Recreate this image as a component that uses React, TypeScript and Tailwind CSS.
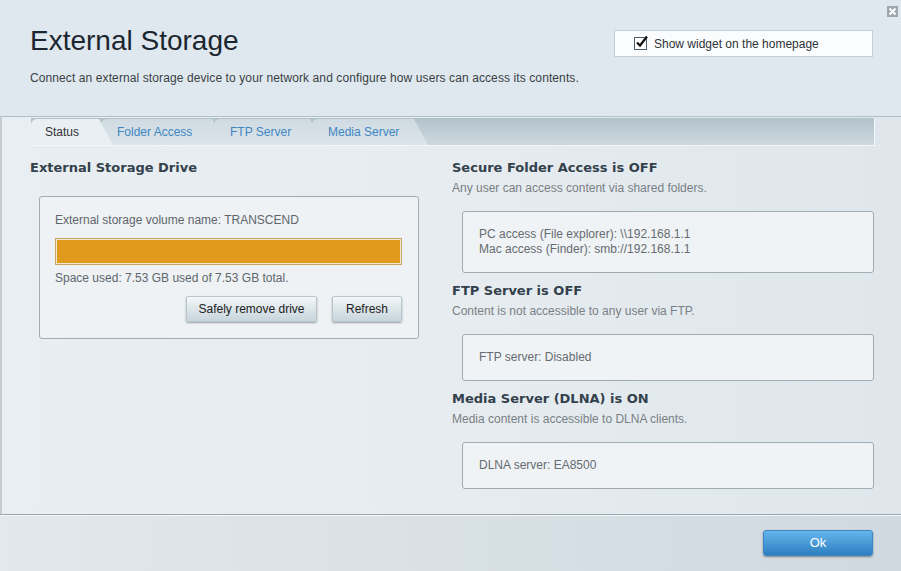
import React from "react";

const tabs = [
  { label: "Status", w: 70, active: true },
  { label: "Folder Access", w: 113 },
  { label: "FTP Server", w: 98 },
  { label: "Media Server", w: 104 },
];

function Section({ title, sub, lines, boxClass }: { title: string; sub: string; lines: string[]; boxClass: string }) {
  return (
    <div className="flex flex-col">
      <div className="text-[13px] leading-[20px] font-bold text-[#33414c] [font-family:'DejaVu_Sans',sans-serif]">{title}</div>
      <div className="mt-[2px] text-[12px] leading-[16px] text-[#7a7f84]">{sub}</div>
      <div className={"ml-[10px] rounded-[3px] border border-[#a3abb2] bg-[#eff3f6] px-[16px] text-[12px] leading-[15px] text-[#666b70] flex flex-col justify-center " + boxClass}>
        {lines.map((l) => (
          <div key={l}>{l}</div>
        ))}
      </div>
    </div>
  );
}

export default function App() {
  return (
    <div className="relative w-[901px] h-[571px] flex flex-col overflow-hidden bg-[#e3eaef] [font-family:'Liberation_Sans',Arial,sans-serif]">
      {/* close */}
      <div className="absolute left-[887px] top-[6px] w-[11px] h-[11px] bg-[#9ea7ae] flex items-center justify-center">
        <svg width="9" height="9" viewBox="0 0 9 9">
          <path d="M1.5 1.5 L7.5 7.5 M7.5 1.5 L1.5 7.5" stroke="#ffffff" strokeWidth="2" />
        </svg>
      </div>

      {/* header */}
      <div className="h-[116px] shrink-0 bg-[#dfe8ef] flex justify-between px-[30px] pt-[24px]">
        <div className="flex flex-col">
          <div className="text-[28px] leading-[34px] text-[#1c2630]">External Storage</div>
          <div className="mt-[12px] text-[12px] leading-[16px] tracking-[0.1px] text-[#3a3f44]">
            Connect an external storage device to your network and configure how users can access its contents.
          </div>
        </div>
        <div className="mt-[6px] mr-[-2px] w-[259px] h-[27px] bg-[#fbfcfd] border border-[#c3ced6] flex items-center pl-[19px] gap-[7px]">
          <div className="w-[13px] h-[13px] border border-[#4f5f6c] bg-white relative">
            <svg className="absolute left-[0px] top-[-3px]" width="14" height="14" viewBox="0 0 14 14">
              <path d="M2 7.5 L5 10.5 L12 1.5" fill="none" stroke="#111" strokeWidth="2.2" />
            </svg>
          </div>
          <span className="text-[12px] text-[#2e3338]">Show widget on the homepage</span>
        </div>
      </div>

      {/* main */}
      <div className="flex-1 flex flex-col border-t border-[#b3bec6] border-l-2 border-l-[#c5cdd3] bg-gradient-to-r from-[#e9eef2] via-[#e6ecf0] to-[#dfe7ec]">
        {/* tabs */}
        <div className="mt-[1px] ml-[29px] w-[844px] h-[28px] flex items-end border-r border-b border-[#f4f7f9] bg-gradient-to-b from-[#b2c2cb] to-[#cdd8de]">
          {tabs.map((t, i) => (
            <div
              key={t.label}
              style={{ width: t.w + 12, marginLeft: i === 0 ? 0 : -12 }}
              className={
                "h-[26px] rounded-tl-[6px] [clip-path:polygon(0_0,calc(100%-14px)_0,100%_100%,0_100%)] flex items-center text-[12px] " +
                (t.active
                  ? "relative z-10 bg-[#e9eff3] text-[#333] pl-[14px]"
                  : "bg-gradient-to-b from-[#cfdbe2] to-[#dbe4e9] text-[#3f86c2] pl-[16px]")
              }
            >
              {t.label}
            </div>
          ))}
        </div>

        <div className="flex">
          {/* left */}
          <div className="ml-[28px] w-[390px] pt-[12px] flex flex-col">
            <div className="text-[13px] leading-[20px] font-bold text-[#33414c] [font-family:'DejaVu_Sans',sans-serif]">External Storage Drive</div>
            <div className="mt-[18px] ml-[9px] w-[380px] rounded-[3px] border border-[#a3abb2] bg-[#eef2f5] pt-[15px] pb-[16px] pl-[15px] pr-[16px] flex flex-col">
              <div className="text-[12px] leading-[16px] text-[#60666b]">External storage volume name: TRANSCEND</div>
              <div className="mt-[10px] h-[27px] border border-[#c8a36a] p-[1px] bg-[#f3e7d2]">
                <div className="h-full bg-[#e09a1c]" />
              </div>
              <div className="mt-[5px] text-[12px] leading-[16px] text-[#60666b]">Space used: 7.53 GB used of 7.53 GB total.</div>
              <div className="mt-[10px] flex justify-end gap-[15px]">
                <button className="h-[26px] w-[131px] rounded-[2px] border border-[#b9c6cd] bg-gradient-to-b from-[#f3f7f9] to-[#c7d5dc] shadow-[0_1px_2px_rgba(0,0,0,0.35)] text-[12px] text-[#222]">
                  Safely remove drive
                </button>
                <button className="h-[26px] w-[70px] rounded-[2px] border border-[#b9c6cd] bg-gradient-to-b from-[#f3f7f9] to-[#c7d5dc] shadow-[0_1px_2px_rgba(0,0,0,0.35)] text-[12px] text-[#222]">
                  Refresh
                </button>
              </div>
            </div>
          </div>

          {/* right */}
          <div className="ml-[32px] w-[422px] pt-[12px] flex flex-col">
            <Section
              title="Secure Folder Access is OFF"
              sub="Any user can access content via shared folders."
              lines={["PC access (File explorer): \\\\192.168.1.1", "Mac access (Finder): smb://192.168.1.1"]}
              boxClass="mt-[15px] h-[62px]"
            />
            <div className="mt-[8px]">
              <Section
                title="FTP Server is OFF"
                sub="Content is not accessible to any user via FTP."
                lines={["FTP server: Disabled"]}
                boxClass="mt-[15px] h-[47px]"
              />
            </div>
            <div className="mt-[8px]">
              <Section
                title="Media Server (DLNA) is ON"
                sub="Media content is accessible to DLNA clients."
                lines={["DLNA server: EA8500"]}
                boxClass="mt-[15px] h-[47px]"
              />
            </div>
          </div>
        </div>
      </div>

      {/* footer */}
      <div className="h-[57px] shrink-0 border-t border-[#9ba6ae] bg-gradient-to-r from-[#e2e8ed] to-[#cfd9df] shadow-[inset_0_1px_0_#f3f6f8] flex justify-end items-start pt-[15px] pr-[28px]">
        <button className="w-[110px] h-[26px] rounded-[3px] bg-gradient-to-b from-[#64b6ec] to-[#2d7fc0] border border-[#3b86c3] shadow-[0_1px_2px_rgba(0,0,0,0.4)] text-[13px] text-white">
          Ok
        </button>
      </div>
    </div>
  );
}
